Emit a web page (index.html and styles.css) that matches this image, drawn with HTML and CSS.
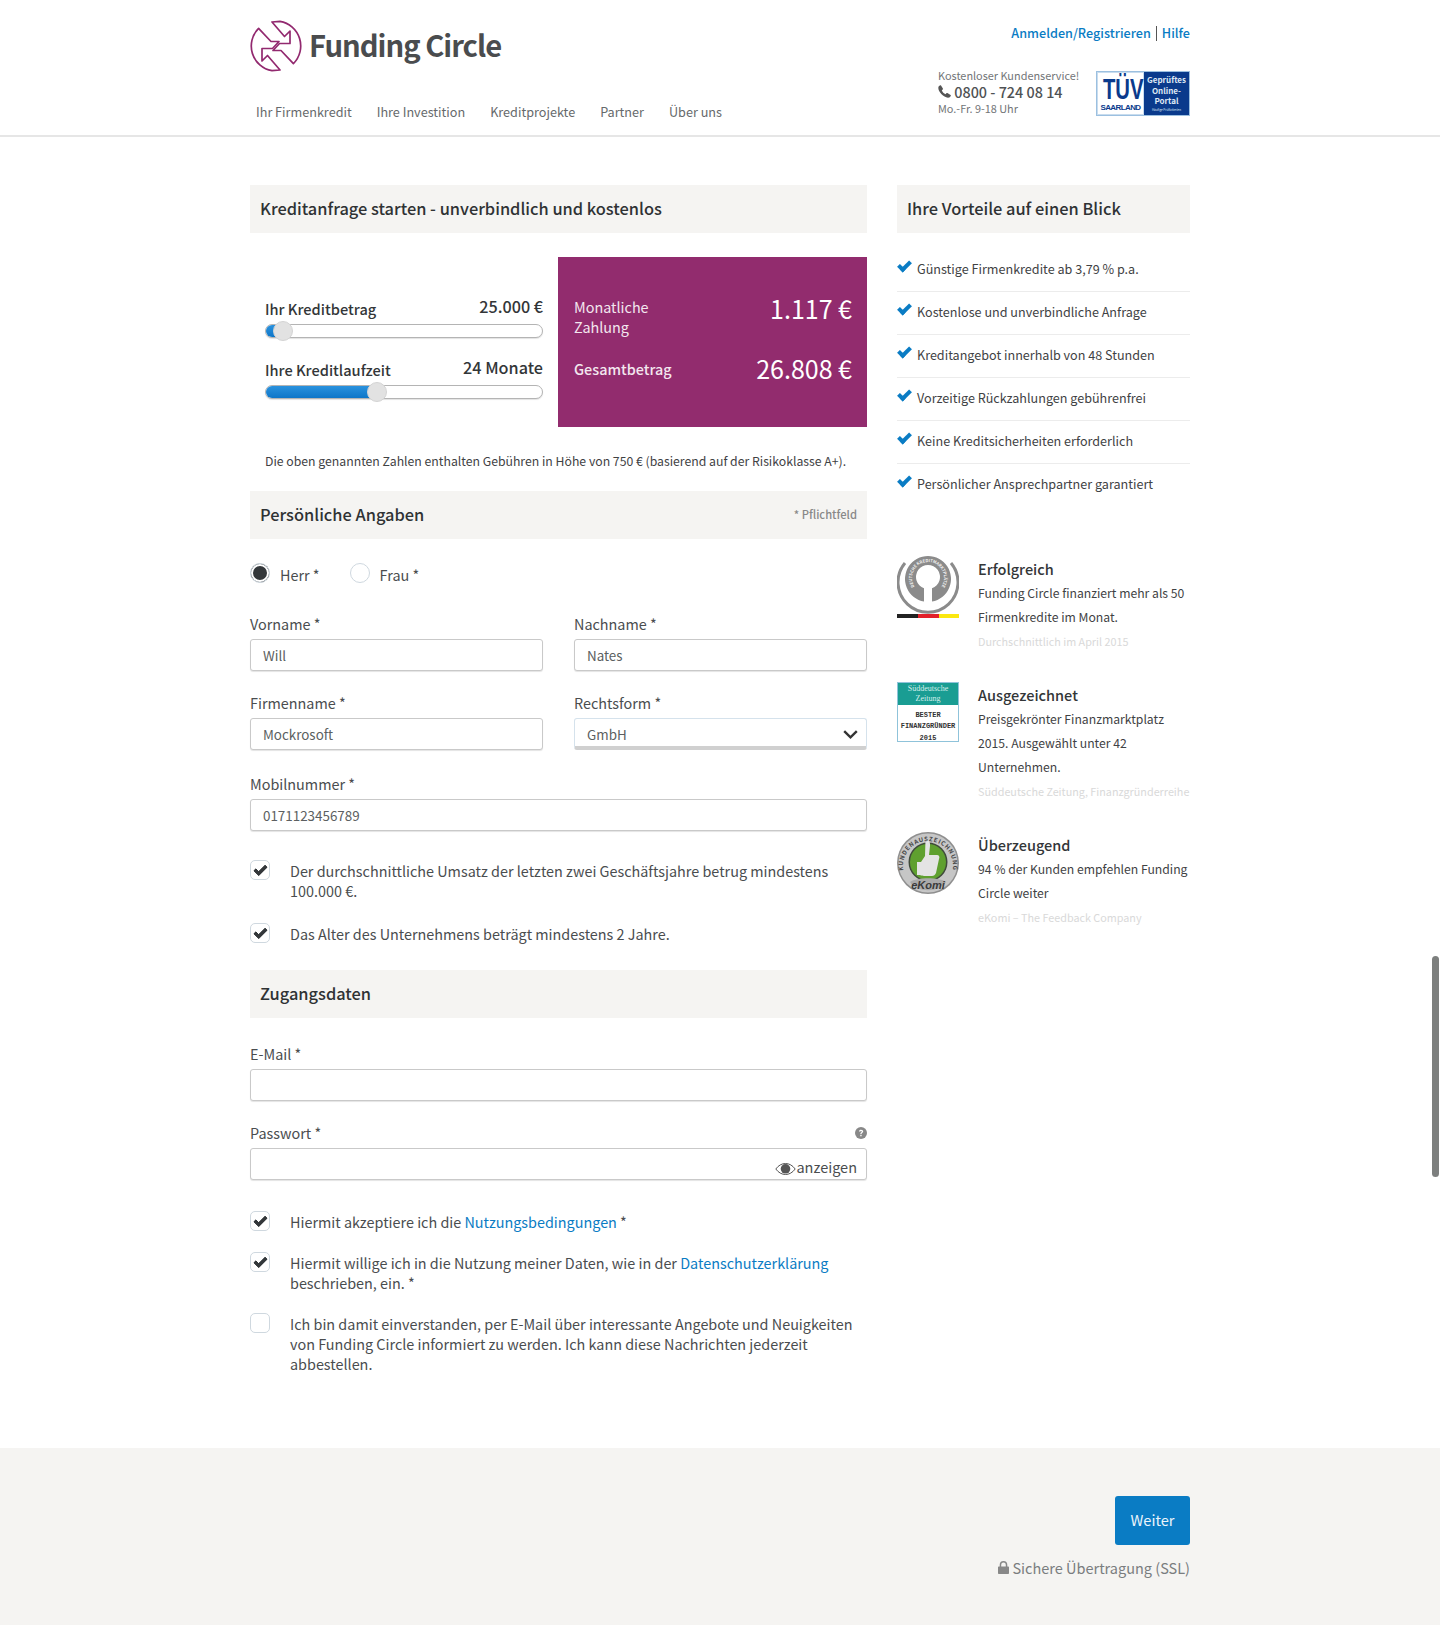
FILE: index.html
```html
<!DOCTYPE html>
<html lang="de">
<head>
    <meta charset="UTF-8">
    <title>Funding Circle</title>
    <link rel="stylesheet" href="styles.css">
</head>
<body>
<div id="header">
    <div class="wrap head-row">
        <div class="head-left">
            <a class="logo" href="#">
                <svg width="52" height="52" viewBox="0 0 52 52" fill="none" stroke="#92296f" stroke-width="1.7" stroke-linejoin="round">
                    <path d="M22 2 L30 1.3 A25 25 0 0 1 43.4 43.6 L31 30.5 H23 L29.5 23.5 H40 V11 L34.5 16.5 Z"/>
                    <path d="M30 50 L22 50.7 A25 25 0 0 1 8.6 8.4 L21 21.5 H29 L22.5 28.5 H12 V41 L17.5 35.5 Z"/>
                </svg>
                <span class="logo-text">Funding Circle</span>
            </a>
            <ul id="nav">
                <li>Ihr Firmenkredit</li>
                <li>Ihre Investition</li>
                <li>Kreditprojekte</li>
                <li>Partner</li>
                <li>Über uns</li>
            </ul>
        </div>
        <div class="head-right">
            <div class="top-links"><a href="#">Anmelden/Registrieren</a><span class="sep"></span><a href="#">Hilfe</a></div>
            <div class="service-row">
                <div class="service">
                    <div>Kostenloser Kundenservice!</div>
                    <div class="phone">
                        <svg width="13" height="13" viewBox="0 0 13 13"><path fill="#555" d="M3 .4 4.9 3.6c.2.4.1.7-.2 1L3.800 5.500c.6 1.500 2.100 3 3.700 3.700l.9-.9c.3-.3.600-.4 1-.2l3.200 1.900c.3.200.3.500.2.800-.4 1.300-1.500 2.100-2.900 2C5.600 12.400.6 7.400.3 3.100.2 1.700 1 .6 2.300.2c.3-.1.500 0 .7.200Z"/></svg>
                        0800 - 724 08 14
                    </div>
                    <div>Mo.-Fr. 9-18 Uhr</div>
                </div>
                <div class="tuv">
                    <div class="tuv-left"><b>TÜV</b><i>SAARLAND</i></div>
                    <div class="tuv-right">Geprüftes Online-<br>Portal<small>Häufige Prüfkriterien</small></div>
                </div>
            </div>
        </div>
    </div>
</div>

<div class="wrap columns">
    <div id="main">
        <h2 class="bar">Kreditanfrage starten - unverbindlich und kostenlos</h2>
        <div class="calc">
            <div class="sliders">
                <div class="slider-head"><span>Ihr Kreditbetrag</span><strong>25.000 €</strong></div>
                <div class="track"><div class="fill" style="width:18px"></div><div class="knob" style="left:7px"></div></div>
                <div class="slider-head second"><span>Ihre Kreditlaufzeit</span><strong>24 Monate</strong></div>
                <div class="track"><div class="fill" style="width:106px"></div><div class="knob" style="left:101px"></div></div>
            </div>
            <div class="result">
                <div class="result-row"><span>Monatliche<br>Zahlung</span><em>1.117 €</em></div>
                <div class="result-row total"><span>Gesamtbetrag</span><em>26.808 €</em></div>
            </div>
        </div>
        <p class="note">Die oben genannten Zahlen enthalten Gebühren in Höhe von 750 € (basierend auf der Risikoklasse A+).</p>

        <h2 class="bar">Persönliche Angaben<small>* Pflichtfeld</small></h2>
        <div class="radios">
            <label><span class="radio on"></span>Herr *</label>
            <label><span class="radio"></span>Frau *</label>
        </div>
        <div class="field-grid">
            <div class="field"><label>Vorname *</label><input type="text" value="Will"></div>
            <div class="field"><label>Nachname *</label><input type="text" value="Nates"></div>
            <div class="field"><label>Firmenname *</label><input type="text" value="Mockrosoft"></div>
            <div class="field"><label>Rechtsform *</label>
                <div class="select">GmbH
                    <svg width="15" height="9" viewBox="0 0 15 9" fill="none" stroke="#333" stroke-width="2.400"><path d="M1.200 1.200 7.500 7.300 13.800 1.200"/></svg>
                </div>
            </div>
            <div class="field wide"><label>Mobilnummer *</label><input type="text" value="0171123456789"></div>
        </div>
        <div class="checks first">
            <div class="check"><span class="box on"></span><p>Der durchschnittliche Umsatz der letzten zwei Geschäftsjahre betrug mindestens 100.000 €.</p></div>
            <div class="check"><span class="box on"></span><p>Das Alter des Unternehmens beträgt mindestens 2 Jahre.</p></div>
        </div>

        <h2 class="bar access">Zugangsdaten</h2>
        <div class="field single"><label>E-Mail *</label><input type="text"></div>
        <div class="field single">
            <label class="label-row">Passwort *
                <svg width="12" height="12" viewBox="0 0 12 12"><circle cx="6" cy="6" r="6" fill="#888"/><path d="M3.900 4.600C4 3.400 5 2.800 6.100 2.800c1.200 0 2.100.7 2.100 1.700 0 1.400-1.600 1.400-1.600 2.500H5.300c0-1.700 1.500-1.600 1.500-2.500 0-.4-.3-.6-.7-.6-.5 0-.8.300-.9.700ZM5.300 7.800h1.300v1.400H5.300Z" fill="#fff"/></svg>
            </label>
            <div class="pw-box">
                <input type="text">
                <span class="pw-show">
                    <svg width="21" height="14" viewBox="0 0 21 14"><path fill="none" stroke="#555" d="M.8 7C3.500 3.400 6.800 1.500 10.500 1.500S17.500 3.400 20.200 7c-2.700 3.600-6 5.500-9.700 5.500S3.500 10.600.8 7Z"/><circle cx="10.500" cy="6.800" r="4.800" fill="#555"/></svg>anzeigen
                </span>
            </div>
        </div>
        <div class="checks">
            <div class="check"><span class="box on"></span><p>Hiermit akzeptiere ich die <a href="#">Nutzungsbedingungen</a> *</p></div>
            <div class="check"><span class="box on"></span><p>Hiermit willige ich in die Nutzung meiner Daten, wie in der <a href="#">Datenschutzerklärung</a> beschrieben, ein. *</p></div>
            <div class="check"><span class="box"></span><p>Ich bin damit einverstanden, per E-Mail über interessante Angebote und Neuigkeiten von Funding Circle informiert zu werden. Ich kann diese Nachrichten jederzeit abbestellen.</p></div>
        </div>
    </div>

    <div id="side">
        <h2 class="bar">Ihre Vorteile auf einen Blick</h2>
        <ul id="benefits">
            <li>Günstige Firmenkredite ab 3,79 % p.a.</li>
            <li>Kostenlose und unverbindliche Anfrage</li>
            <li>Kreditangebot innerhalb von 48 Stunden</li>
            <li>Vorzeitige Rückzahlungen gebührenfrei</li>
            <li>Keine Kreditsicherheiten erforderlich</li>
            <li>Persönlicher Ansprechpartner garantiert</li>
        </ul>

        <div class="award">
            <svg class="award-img" width="62" height="64" viewBox="0 0 62 64">
                <path d="M8 8A30 30 0 1 0 54 8" fill="none" stroke="#8b8b8b" stroke-width="3"/>
                <path fill="#8b8b8b" d="M27 46.600A23 23 0 1 1 35 46.600V33.300A12 12 0 1 0 27 33.300Z"/>
                <path id="seal-curve" d="M19 33.600A16 16 0 1 1 43 33.600" fill="none"/>
                <text class="seal-text"><textPath href="#seal-curve" startOffset="50%" text-anchor="middle">DEUTSCHE KREDITMARKTPLÄTZE</textPath></text>
                <rect x="0" y="59" width="21" height="4" fill="#222"/>
                <rect x="21" y="59" width="21" height="4" fill="#e3202a"/>
                <rect x="42" y="59" width="20" height="4" fill="#fbe80f"/>
            </svg>
            <div class="award-body">
                <h3>Erfolgreich</h3>
                <p>Funding Circle finanziert mehr als 50 Firmenkredite im Monat.</p>
                <span>Durchschnittlich im April 2015</span>
            </div>
        </div>
        <div class="award">
            <div class="award-img sz">
                <div class="sz-top">Süddeutsche<br>Zeitung</div>
                <div class="sz-bottom">BESTER<br>FINANZGRÜNDER<br>2015</div>
            </div>
            <div class="award-body">
                <h3>Ausgezeichnet</h3>
                <p>Preisgekrönter Finanzmarktplatz 2015. Ausgewählt unter 42 Unternehmen.</p>
                <span>Süddeutsche Zeitung, Finanzgründerreihe</span>
            </div>
        </div>
        <div class="award">
            <svg class="award-img" width="62" height="64" viewBox="0 0 62 64">
                <circle cx="31" cy="32" r="31" fill="#8f8f8f"/>
                <circle cx="31" cy="32" r="29.500" fill="#c6c6c6"/>
                <circle cx="31" cy="31" r="19.500" fill="#3f4a3a"/>
                <circle cx="31" cy="31" r="18" fill="#5fa02f"/>
                <path fill="#e4e4e4" d="M20 31h4l4-6 .5-16c3-1 5 2 4.500 6l-1 9h8c2 0 3 2 2 4l-3 14c-1 2-2 3-4 3H28c-3 0-4-1-8-1Z"/>
                <path fill="#aaa" d="M13 51C20 46 42 46 49 51 43 62 19 62 13 51Z"/>
                <path id="ekomi-curve" d="M7 42A25 25 0 1 1 55 42" fill="none"/>
                <text class="ekomi-ring"><textPath href="#ekomi-curve" startOffset="50%" text-anchor="middle">KUNDENAUSZEICHNUNG</textPath></text>
                <text class="ekomi-name" x="31" y="58" text-anchor="middle">eKomi</text>
            </svg>
            <div class="award-body">
                <h3>Überzeugend</h3>
                <p>94 % der Kunden empfehlen Funding Circle weiter</p>
                <span>eKomi – The Feedback Company</span>
            </div>
        </div>
    </div>
</div>

<div id="footer">
    <div class="wrap foot-col">
        <a class="btn" href="#">Weiter</a>
        <div class="ssl">
            <svg width="11" height="13" viewBox="0 0 11 13"><path fill="#888" d="M1 5.500h.7V3.800a3.800 3.800 0 0 1 7.600 0v1.700H10c.6 0 1 .4 1 1V12c0 .6-.4 1-1 1H1c-.6 0-1-.4-1-1V6.500c0-.6.4-1 1-1Zm2.200 0h4.600V3.800a2.300 2.300 0 0 0-4.600 0Z"/></svg>
            Sichere Übertragung (SSL)
        </div>
    </div>
</div>
<div id="scroll-thumb"></div>
</body>
</html>
```

FILE: styles.css
```css
* {
    margin: 0;
    padding: 0;
    box-sizing: border-box;
}

ul {
    list-style: none;
}

a {
    text-decoration: none;
    color: #0a7cc4;
}

body {
    font-family: "Noto Sans CJK SC", "Noto Sans", sans-serif;
    font-size: 14.400px;
    line-height: 20px;
    color: #3f4244;
    background: #fff;
    height: 1625px;
    overflow: hidden;
    position: relative;
}

.wrap {
    width: 940px;
    margin: 0 auto;
}

/* header */
#header {
    height: 137px;
    border-bottom: 2px solid #e6e6e6;
}

.head-row {
    display: flex;
    justify-content: space-between;
}

.logo {
    display: flex;
    align-items: center;
    gap: 7px;
    margin-top: 20px;
    height: 52px;
}

.logo-text {
    font-size: 29.200px;
    font-weight: 700;
    letter-spacing: -1px;
    color: #4a4c4e;
    line-height: 48px;
    padding-bottom: 4px;
}

#nav {
    display: flex;
    gap: 25px;
    margin: 30px 0 0 6px;
    font-size: 12.650px;
    color: #66696b;
}

.top-links {
    display: flex;
    justify-content: flex-end;
    align-items: center;
    margin-top: 23px;
    font-size: 12.650px;
    font-weight: 500;
}

.top-links a {
    color: #0a7cc4;
}

.sep {
    width: 1px;
    height: 15px;
    background: #555;
    margin: 0 5px;
}

.service-row {
    display: flex;
    margin-top: 28px;
    gap: 18px;
}

.service {
    font-size: 10.900px;
    line-height: 15px;
    color: #727577;
    width: 140px;
    margin-top: -3px;
    white-space: nowrap;
}

.phone {
    font-size: 14.400px;
    line-height: 18px;
    color: #4f5254;
    font-weight: 500;
}

.tuv {
    width: 94px;
    height: 45px;
    display: flex;
    border: 1px solid #9cc0e0;
    background: #fff;
    overflow: hidden;
}

.tuv-left {
    width: 47px;
    padding-top: 3px;
    color: #0a3a8c;
    text-align: center;
    background: #fff;
    border: 1px solid #c8dcee;
}

.tuv-left b {
    display: block;
    font-family: "Liberation Sans", sans-serif;
    font-size: 26px;
    line-height: 24px;
    transform: scale(.78, 1.100);
    transform-origin: top;
}

.tuv-left i {
    display: block;
    font-family: "Liberation Sans", sans-serif;
    font-style: normal;
    font-weight: 700;
    font-size: 8px;
    line-height: 9px;
    margin-top: 3px;
    letter-spacing: -0.600px;
}

.tuv-right {
    flex: 1;
    background: #0a3a8c;
    color: #dfe8f4;
    font-size: 8px;
    font-weight: 700;
    line-height: 10.500px;
    text-align: center;
    padding-top: 3px;
}

.tuv-right small {
    display: block;
    font-size: 3px;
    font-weight: 400;
    line-height: 7px;
}

/* columns */
.columns {
    display: flex;
    gap: 30px;
    padding-top: 48px;
}

#main {
    width: 617px;
}

#side {
    width: 293px;
}

.bar {
    display: flex;
    justify-content: space-between;
    align-items: center;
    height: 48px;
    padding: 0 10px 2px;
    background: #f5f4f2;
    font-size: 16.400px;
    font-weight: 500;
    color: #2f3234;
}

.bar small {
    font-size: 11.200px;
    color: #888;
}

/* calculator */
.calc {
    display: flex;
    margin-top: 24px;
    height: 170px;
}

.sliders {
    width: 308px;
    padding: 40px 15px 0;
}

.slider-head {
    display: flex;
    justify-content: space-between;
    align-items: flex-end;
    height: 22px;
    font-size: 14.600px;
    font-weight: 500;
    color: #333638;
}

.slider-head strong {
    font-size: 16.200px;
    font-weight: 500;
    line-height: 22px;
    position: relative;
    top: -2px;
}

.slider-head.second {
    margin-top: 20px;
}

.track {
    position: relative;
    height: 14px;
    margin-top: 5px;
    background: #fff;
    border: 1px solid #b4b4b4;
    border-radius: 7px;
    box-shadow: 0 1px 1px #e3e3e3;
}

.fill {
    height: 12px;
    background: linear-gradient(#2a92de, #0e76c8);
    border-radius: 6px 0 0 6px;
}

.knob {
    position: absolute;
    top: -4px;
    width: 20px;
    height: 20px;
    border-radius: 50%;
    background: #e2e2e2;
    border: 1px solid #d4d4d4;
}

.result {
    width: 309px;
    padding: 40px 15px 0 16px;
    background: #922c6e;
    color: #f3e7ef;
}

.result-row {
    display: flex;
    justify-content: space-between;
    align-items: flex-start;
    font-size: 14.400px;
}

.result-row em {
    font-style: normal;
    font-size: 25px;
    line-height: 22px;
    color: #fff;
}

.result-row.total {
    margin-top: 20px;
    font-weight: 500;
}

.result-row.total span {
    line-height: 24px;
}

.result-row.total em {
    font-weight: 400;
}

.note {
    margin: 24px 0 20px;
    padding-left: 15px;
    font-size: 12.250px;
    line-height: 20px;
    white-space: nowrap;
}

/* form */
.radios {
    display: flex;
    gap: 30px;
    margin-top: 26px;
    height: 20px;
    color: #4a4d4f;
}

.radios label {
    display: flex;
    gap: 10px;
}

.radio {
    width: 20px;
    height: 20px;
    border-radius: 50%;
    border: 1px solid #cfd8df;
    background: #fff;
    position: relative;
    top: -2px;
}

.radio.on {
    background: #33373a;
    box-shadow: inset 0 0 0 2px #fff;
}

.field-grid {
    display: grid;
    grid-template-columns: 293px 293px;
    justify-content: space-between;
    row-gap: 22px;
    margin-top: 29px;
}

.field label {
    display: block;
    line-height: 20px;
    margin-bottom: 5px;
    color: #4a4d4f;
}

.field.wide {
    grid-column: 1 / 3;
    margin-top: 2px;
}

.field input {
    display: block;
    width: 100%;
    height: 32px;
    padding: 0 12px;
    border: 1px solid #c9c9c9;
    border-radius: 3px;
    box-shadow: 0 1px 1px #e4e4e4;
    font-family: inherit;
    font-size: 13.400px;
    color: #5c5f61;
    background: #fff;
    outline: 0;
}

.select {
    display: flex;
    justify-content: space-between;
    align-items: center;
    height: 32px;
    padding: 3px 8px 0 12px;
    border: 1px solid #d5e2ec;
    border-bottom: 4px solid #d0d0d0;
    border-radius: 3px;
    font-size: 13.400px;
    color: #5c5f61;
}

.checks {
    margin-top: 32px;
}

.checks.first {
    margin-top: 30px;
}

.check {
    display: flex;
    gap: 20px;
    margin-bottom: 21px;
    line-height: 20px;
    color: #4a4d4f;
}

.checks.first .check {
    margin-bottom: 23px;
}

.check:last-child,
.checks.first .check:last-child {
    margin-bottom: 0;
}

.check a {
    color: #0a7cc4;
}

.box {
    flex: none;
    position: relative;
    width: 20px;
    height: 20px;
    margin-top: -1px;
    border: 1px solid #cfd8df;
    border-radius: 5px;
    background: #fff;
}

.box.on::after {
    content: "";
    position: absolute;
    left: 3px;
    top: 4px;
    width: 9px;
    height: 4px;
    border-left: 4px solid #33373a;
    border-bottom: 4px solid #33373a;
    transform: rotate(-45deg);
    border-radius: 1px;
}

.bar.access {
    margin-top: 26px;
}

.field.single {
    margin-top: 26px;
}

.field.single + .field.single {
    margin-top: 22px;
}

.label-row {
    display: flex !important;
    justify-content: space-between;
    align-items: center;
}

.pw-box {
    position: relative;
}

.pw-show {
    position: absolute;
    right: 10px;
    top: 9px;
    display: flex;
    align-items: center;
    font-size: 14.500px;
    color: #4a4d4f;
}

.pw-show svg {
    margin-top: 3px;
}

/* sidebar */
#benefits {
    margin-top: 16px;
}

#benefits li {
    position: relative;
    height: 43px;
    line-height: 40px;
    padding-left: 20px;
    font-size: 12.600px;
    color: #3f4244;
    border-bottom: 1px solid #ececec;
}

#benefits li:last-child {
    border-bottom: 0;
}

#benefits li::before {
    content: "";
    position: absolute;
    left: 1px;
    top: 12px;
    width: 9px;
    height: 4px;
    border-left: 4px solid #0a7cc4;
    border-bottom: 4px solid #0a7cc4;
    transform: rotate(-45deg);
}

.award {
    display: flex;
    gap: 19px;
    margin-top: 28px;
}

#benefits + .award {
    margin-top: 48px;
}

.award-img {
    flex: none;
    width: 62px;
}

.award-body {
    padding-top: 1px;
}

.award-body h3 {
    font-size: 14.500px;
    font-weight: 500;
    line-height: 25px;
    color: #333638;
}

.award-body p {
    font-size: 12.200px;
    line-height: 24px;
    color: #3f4244;
}

.award-body span {
    display: block;
    font-size: 10.800px;
    line-height: 24px;
    color: #d9d9d9;
    white-space: nowrap;
}

.seal-text {
    font-size: 4.200px;
    font-weight: 700;
    fill: #f2f2f2;
}

.sz {
    height: 60px;
    margin-top: 1px;
    border: 1px solid #8fc3da;
    text-align: center;
    background: #fff;
}

.sz-top {
    height: 22px;
    padding-top: 1px;
    background: #1a9d93;
    color: #d5efeb;
    font-family: "Liberation Serif", serif;
    font-size: 8px;
    line-height: 10px;
}

.sz-bottom {
    padding-top: 3px;
    font-family: "Liberation Mono", monospace;
    font-size: 7px;
    font-weight: 700;
    line-height: 10px;
    color: #333;
    transform: scaleY(1.150);
    transform-origin: top;
}

.ekomi-ring {
    font-size: 6px;
    font-weight: 700;
    letter-spacing: .8px;
    fill: #444;
}

.ekomi-name {
    font-family: "Liberation Sans", sans-serif;
    font-size: 11px;
    font-weight: 700;
    font-style: italic;
    fill: #3a3a3a;
}

/* footer */
#footer {
    position: absolute;
    left: 0;
    right: 0;
    bottom: 0;
    height: 177px;
    background: #f5f4f2;
}

.foot-col {
    display: flex;
    flex-direction: column;
    align-items: flex-end;
    padding-top: 48px;
}

.btn {
    display: block;
    width: 75px;
    height: 49px;
    line-height: 47px;
    text-align: center;
    border-radius: 3px;
    background: #0a7cc4;
    color: #eaf4fb;
    font-size: 14.600px;
}

.ssl {
    margin-top: 13px;
    color: #7a7d7f;
    font-size: 14.500px;
}

#scroll-thumb {
    position: absolute;
    left: 1432px;
    top: 956px;
    width: 7px;
    height: 221px;
    border-radius: 4px;
    background: #7d7f7e;
}
```
